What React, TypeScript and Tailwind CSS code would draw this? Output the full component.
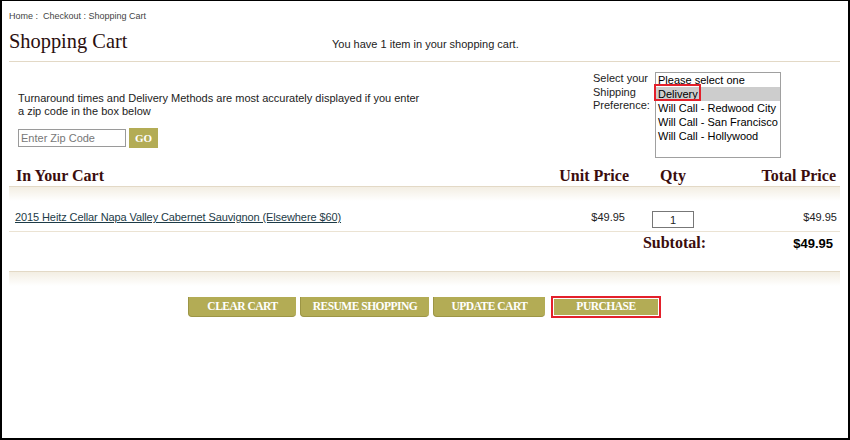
import React from 'react';

const shippingOptions = [
  'Please select one',
  'Delivery',
  'Will Call - Redwood City',
  'Will Call - San Francisco',
  'Will Call - Hollywood',
];

function CartButton({ label, width, highlighted = false }: { label: string; width: string; highlighted?: boolean }) {
  if (highlighted) {
    return (
      <div className={`${width} h-[22px] border-2 border-[#e3202b] p-px bg-white`}>
        <div className="h-full bg-[#b3ac55] flex items-center justify-center text-white font-bold text-[11.5px] tracking-[-0.5px] font-['Liberation_Serif',serif]">
          {label}
        </div>
      </div>
    );
  }
  return (
    <div
      className={`${width} h-[20px] bg-[#b3ac55] rounded-b-[4px] border-b border-l border-[#9c9545] flex items-center justify-center text-white font-bold text-[11.5px] tracking-[-0.5px] font-['Liberation_Serif',serif]`}
    >
      {label}
    </div>
  );
}

export default function App() {
  return (
    <div className="w-[850px] h-[440px] bg-white border-t border-x-2 border-b-2 border-black pl-[7px] pr-[8px] font-['Liberation_Sans',Arial,sans-serif] text-[#222]">
      {/* breadcrumb */}
      <div className="pt-[10px] text-[9px] leading-[11px] text-[#444]">
        Home :&nbsp; Checkout : Shopping Cart
      </div>

      {/* title row */}
      <div className="mt-[7px] flex items-baseline border-b border-[#e3d9c6] pb-[8px]">
        <h1 className="w-[323px] text-[20.4px] leading-[24px] text-[#2a0f0f] font-['Liberation_Serif',serif]">
          Shopping Cart
        </h1>
        <p className="text-[11px] text-[#222]">You have 1 item in your shopping cart.</p>
      </div>

      {/* zip + shipping preference */}
      <div className="h-[104px] flex justify-between">
        <div className="pl-[9px] pt-[30px]">
          <p className="text-[11px] leading-[13px] text-[#222]">
            Turnaround times and Delivery Methods are most accurately displayed if you enter
            <br />a zip code in the box below
          </p>
          <div className="mt-[10px] flex items-center gap-[3px]">
            <input
              placeholder="Enter Zip Code"
              className="w-[108px] h-[18px] border border-[#9a9a9a] px-[2px] text-[11px] placeholder:text-[#777] outline-none"
            />
            <button className="w-[29px] h-[20px] bg-[#b3ac55] text-white font-bold text-[11px] font-['Liberation_Serif',serif]">
              GO
            </button>
          </div>
        </div>

        <div className="pt-[10px] mr-[59px] flex">
          <div className="w-[62px] text-[11px] leading-[13.5px] text-[#222]">
            Select your
            <br />
            Shipping
            <br />
            Preference:
          </div>
          <div className="relative w-[126px] h-[86px] border border-[#a0a0a0] text-[11px] leading-[14px] text-black">
            {shippingOptions.map((opt, i) => (
              <div key={opt} className={`pl-[2px] ${i === 1 ? 'bg-[#cdcdcd]' : ''}`}>
                {opt}
              </div>
            ))}
            <div className="absolute left-[-2px] top-[11px] w-[47px] h-[17px] border-2 border-[#e3202b]" />
          </div>
        </div>
      </div>

      {/* table header */}
      <div className="flex h-[21px] border-b border-[#e3d9c6] text-[16px] leading-[20px] font-bold text-[#3b0d0d] font-['Liberation_Serif',serif]">
        <div className="flex-1 pl-[7px]">In Your Cart</div>
        <div className="w-[100px] text-right">Unit Price</div>
        <div className="w-[88px] text-center">Qty</div>
        <div className="w-[123px] text-right pr-[4px]">Total Price</div>
      </div>
      <div className="h-[14px] bg-gradient-to-b from-[#f3eee3] to-white" />

      {/* product row */}
      <div className="flex items-start h-[31px] pt-[10px] border-b border-[#ebe3d3] text-[11px] leading-[13px]">
        <div className="flex-1 pl-[6px]">
          <a href="#" className="underline text-[#1d3b47] tracking-[-0.1px]">
            2015 Heitz Cellar Napa Valley Cabernet Sauvignon (Elsewhere $60)
          </a>
        </div>
        <div className="w-[100px] text-right pr-[4px]">$49.95</div>
        <div className="w-[88px] flex justify-center">
          <input
            defaultValue="1"
            className="w-[42px] h-[17px] border border-[#777] text-center text-[11px] outline-none"
          />
        </div>
        <div className="w-[123px] text-right pr-[3px]">$49.95</div>
      </div>

      {/* subtotal */}
      <div className="flex items-start h-[40px] pt-[1px] border-b border-[#e3d9c6]">
        <div className="flex-1 text-right text-[16px] leading-[20px] font-bold text-[#3b0d0d] font-['Liberation_Serif',serif]">
          Subtotal:
        </div>
        <div className="w-[134px] text-right pr-[7px] pt-[3px] text-[13px] leading-[16px] font-bold text-black">
          $49.95
        </div>
      </div>
      <div className="h-[14px] bg-gradient-to-b from-[#f3eee3] to-white" />

      {/* buttons */}
      <div className="mt-[10px] flex justify-center items-start">
        <div className="flex items-start gap-[4px] mt-[1px]">
          <CartButton label="CLEAR CART" width="w-[108px]" />
          <CartButton label="RESUME SHOPPING" width="w-[129px]" />
          <CartButton label="UPDATE CART" width="w-[112px]" />
        </div>
        <div className="ml-[6px]">
          <CartButton label="PURCHASE" width="w-[110px]" highlighted />
        </div>
      </div>
    </div>
  );
}
